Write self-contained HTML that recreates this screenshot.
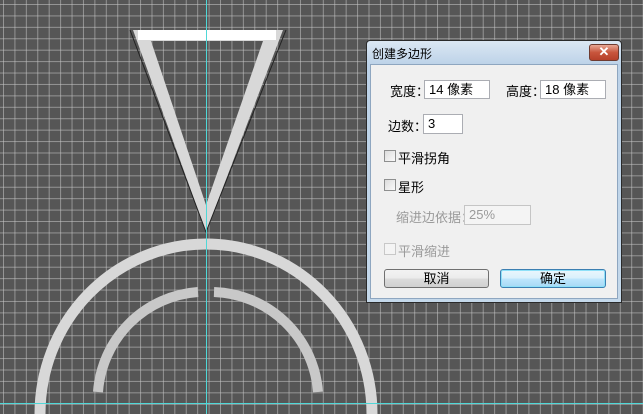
<!DOCTYPE html>
<html><head><meta charset="utf-8"><style>
html,body{margin:0;padding:0}
body{width:643px;height:414px;overflow:hidden;position:relative;background-color:#565656;
background-image:linear-gradient(to right,rgba(200,200,200,.55) 1px,transparent 1px),linear-gradient(to bottom,rgba(200,200,200,.55) 1px,transparent 1px);
background-size:11.43px 11.43px;background-position:3px 4px;
font-family:"Liberation Sans","Noto Sans CJK SC",sans-serif;font-size:13px;color:#000}
svg{position:absolute;left:0;top:0}
.dlg{position:absolute;left:366px;top:40px;width:256px;height:263px;border:1px solid #2a2a2a;border-radius:4px 4px 0 0;background:linear-gradient(#dbe7f3,#bcd2e8 24px,#c4d8ea);box-sizing:border-box}
.body{position:absolute;left:3px;top:23px;right:3px;bottom:3px;background:#f0f0f0;border:1px solid #8ea6c0}
.title{position:absolute;left:5px;top:4px;font-size:12px}
.close{position:absolute;left:222px;top:3px;width:30px;height:17px;border:1px solid #6e3b30;border-radius:3px;background:linear-gradient(#e8a795,#c8553c 50%,#b5402a);box-sizing:border-box;color:#fff;font-weight:bold;text-align:center;line-height:14px;font-size:13px}
.a{position:absolute}
.inp{position:absolute;background:#fff;border:1px solid #abadb3;box-sizing:border-box;padding-left:4px;line-height:17px}
.cb{position:absolute;width:12px;height:12px;border:1px solid #8e8f8f;background:linear-gradient(135deg,#dcdcdc,#fafafa);box-sizing:border-box}
.btn{position:absolute;height:19px;border:1px solid #707070;border-radius:3px;box-sizing:border-box;background:linear-gradient(#f3f3f3,#ebebeb 50%,#dcdcdc 51%,#d0d0d0);text-align:center;line-height:17px}
.gray{color:#9a9a9a}
</style></head><body>
<svg width="643" height="414">
<path d="M133 30 H283 L206 232 Z M151 41 L206 205 L263 41 Z" fill="#d8d8d8" fill-rule="evenodd"/>
<rect x="138" y="30" width="138" height="10" fill="#fff"/>
<g fill="none">
<path d="M40 414 A166 170 0 0 1 372 414" stroke="#d8d8d8" stroke-width="11"/>
<path d="M98 392 A108 108 0 0 1 198 292" stroke="#c8c8c8" stroke-width="10"/>
<path d="M214 292 A108 108 0 0 1 318 392" stroke="#c8c8c8" stroke-width="10"/>
<path d="M130 30 L206 232 L286 30" stroke="#222" stroke-width="1"/>
</g>
<line x1="206.5" y1="0" x2="206.5" y2="414" stroke="#4fd8d8" stroke-width="1"/>
<line x1="0" y1="403.5" x2="643" y2="403.5" stroke="#4fd8d8" stroke-width="1"/>
</svg>
<div class="dlg">
<div class="title">创建多边形</div>
<div class="close">✕</div>
<div class="body"></div>
</div>
<div class="a" style="left:390px;top:81px">宽度：</div>
<div class="inp" style="left:424px;top:80px;width:66px;height:19px">14 像素</div>
<div class="a" style="left:506px;top:81px">高度：</div>
<div class="inp" style="left:540px;top:80px;width:66px;height:19px">18 像素</div>
<div class="a" style="left:388px;top:116px">边数：</div>
<div class="inp" style="left:423px;top:114px;width:40px;height:20px">3</div>
<div class="cb" style="left:384px;top:150px"></div>
<div class="a" style="left:398px;top:148px">平滑拐角</div>
<div class="cb" style="left:384px;top:179px"></div>
<div class="a" style="left:398px;top:177px">星形</div>
<div class="a gray" style="left:396px;top:207px">缩进边依据：</div>
<div class="inp gray" style="left:464px;top:205px;width:67px;height:20px;background:#f4f4f4;border-color:#c5c5c5">25%</div>
<div class="cb" style="left:384px;top:243px;border-color:#c8c8c8;background:#f4f4f4"></div>
<div class="a gray" style="left:398px;top:241px">平滑缩进</div>
<div class="btn" style="left:384px;top:269px;width:105px">取消</div>
<div class="btn" style="left:500px;top:269px;width:106px;border-color:#3c7fb1;box-shadow:inset 0 0 0 1px #8ee0f8;background:linear-gradient(#eaf6fd,#d9f0fc 50%,#bee6fd 51%,#a7d9f5)">确定</div>
</body></html>
